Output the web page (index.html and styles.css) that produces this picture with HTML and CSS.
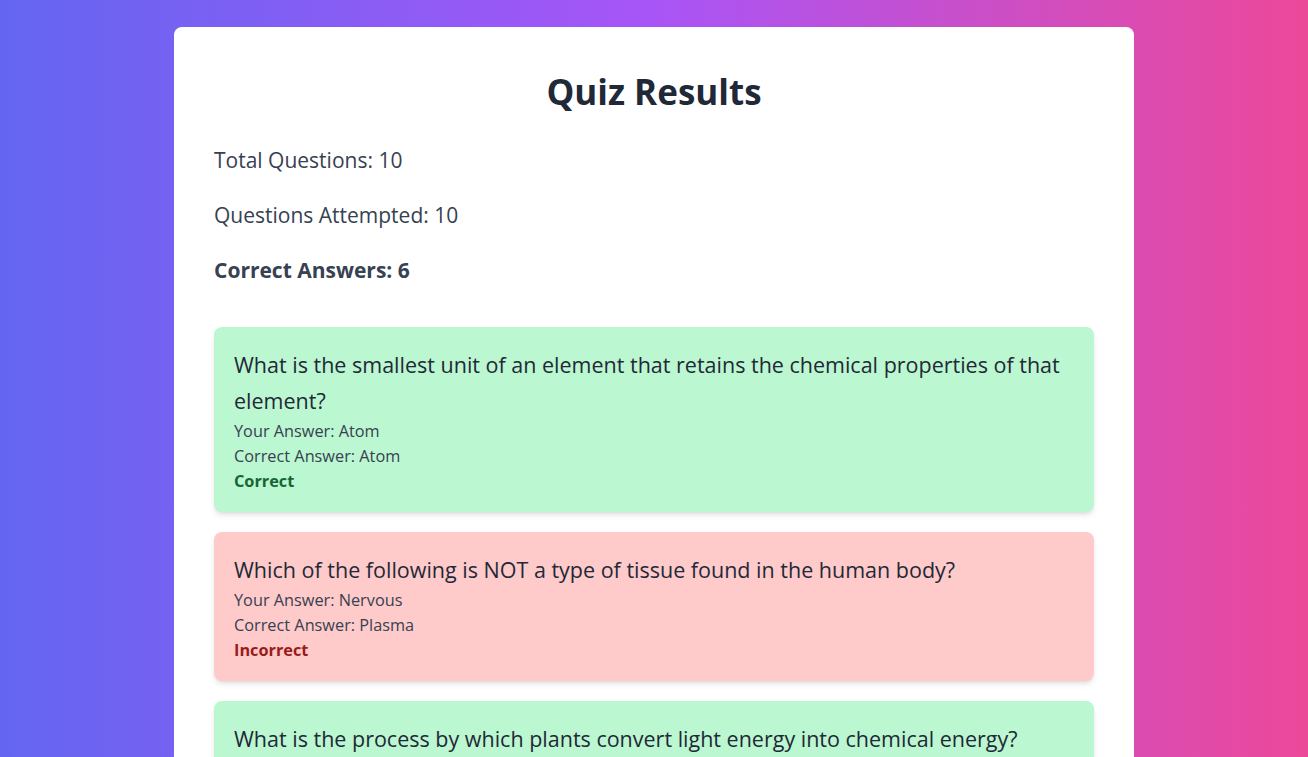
FILE: index.html
```html
<!DOCTYPE html>
<html lang="en">
<head>
<meta charset="utf-8">
<title>Quiz Results</title>
<link rel="stylesheet" href="styles.css">
</head>
<body>
<main class="card">
  <h1 class="title">Quiz Results</h1>
  <div class="stats">
    <p class="stat">Total Questions: 10</p>
    <p class="stat">Questions Attempted: 10</p>
    <p class="stat stat-strong">Correct Answers: 6</p>
  </div>
  <div class="results">
    <div class="result result-correct">
      <p class="question">What is the smallest unit of an element that retains the chemical properties of that element?</p>
      <p class="answer">Your Answer: Atom</p>
      <p class="answer">Correct Answer: Atom</p>
      <p class="verdict verdict-correct">Correct</p>
    </div>
    <div class="result result-incorrect">
      <p class="question">Which of the following is NOT a type of tissue found in the human body?</p>
      <p class="answer">Your Answer: Nervous</p>
      <p class="answer">Correct Answer: Plasma</p>
      <p class="verdict verdict-incorrect">Incorrect</p>
    </div>
    <div class="result result-correct">
      <p class="question">What is the process by which plants convert light energy into chemical energy?</p>
      <p class="answer">Your Answer: Photosynthesis</p>
      <p class="answer">Correct Answer: Photosynthesis</p>
      <p class="verdict verdict-correct">Correct</p>
    </div>
  </div>
</main>
</body>
</html>
```

FILE: styles.css
```css
html, body {
  margin: 0;
  padding: 0;
}
body {
  min-height: 100vh;
  background: linear-gradient(to right, #6366f1, #a855f7, #ec4899);
  font-family: "Open Sans", "Noto Sans", sans-serif;
  padding-top: 27px;
  box-sizing: border-box;
}
.card {
  max-width: 960px;
  margin: 0 auto;
  background: #ffffff;
  border-radius: 8px;
  padding: 40px;
  box-sizing: border-box;
}
.title {
  margin: 0 0 29px;
  font-size: 35px;
  line-height: 50px;
  font-weight: 700;
  text-align: center;
  color: #1f2937;
}
.stats {
  display: flex;
  flex-direction: column;
  gap: 27px;
  margin-bottom: 43px;
}
.stat {
  margin: 0;
  font-size: 21px;
  line-height: 28px;
  color: #374151;
}
.stat-strong {
  font-weight: 700;
}
.results {
  display: flex;
  flex-direction: column;
  gap: 20px;
}
.result {
  border-radius: 8px;
  padding: 20px 20px 18px;
  box-shadow: 0 4px 6px -1px rgba(0,0,0,0.1), 0 2px 4px -2px rgba(0,0,0,0.1);
}
.result-correct { background: #bbf7d0; }
.result-incorrect { background: #fecaca; }
.question {
  margin: 0;
  font-size: 21.5px;
  line-height: 36px;
  color: #1f2937;
}
.answer {
  margin: 0;
  font-size: 16.3px;
  line-height: 25px;
  color: #374151;
}
.verdict {
  margin: 0;
  font-size: 16.3px;
  line-height: 25px;
  font-weight: 700;
}
.verdict-correct { color: #166534; }
.verdict-incorrect { color: #991b1b; }
```
